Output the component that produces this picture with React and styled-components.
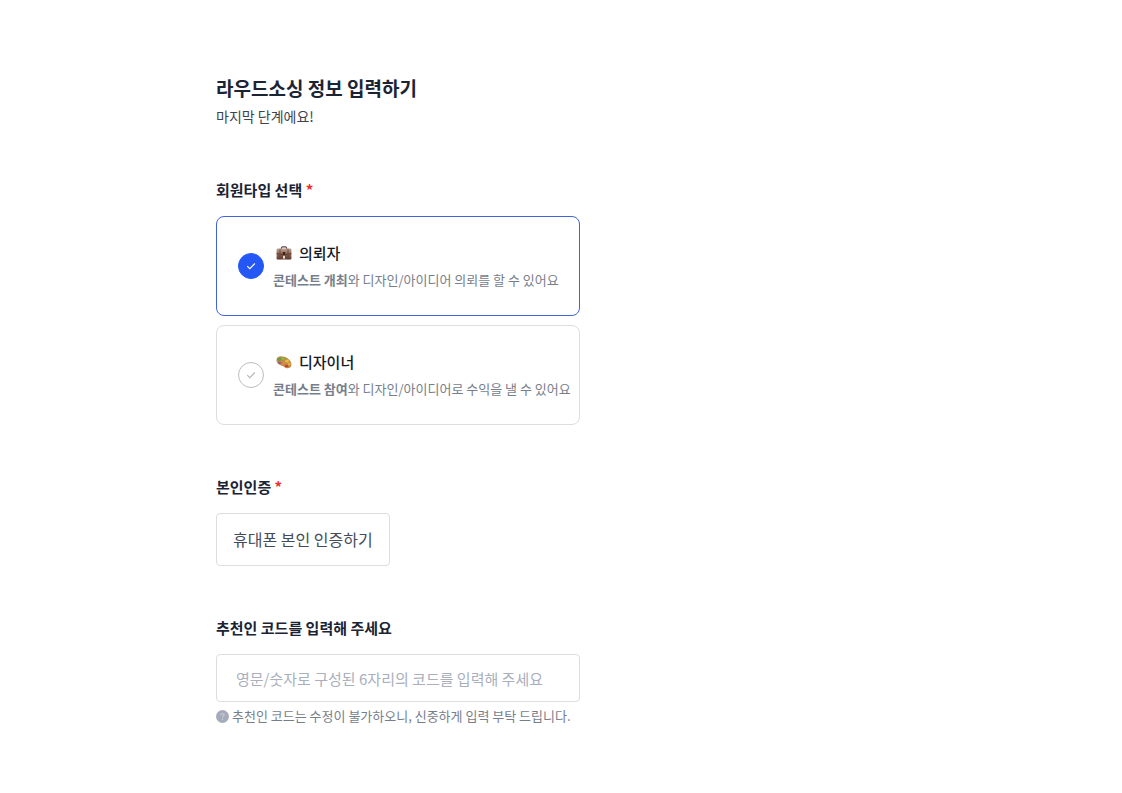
import { useState } from 'react';
import styled, { createGlobalStyle } from 'styled-components';

const memberTypes = [
  {
    id: 'client',
    name: '의뢰자',
    icon: BriefcaseIcon,
    strong: '콘테스트 개최',
    text: '와 디자인/아이디어 의뢰를 할 수 있어요',
  },
  {
    id: 'designer',
    name: '디자이너',
    icon: PaletteIcon,
    strong: '콘테스트 참여',
    text: '와 디자인/아이디어로 수익을 낼 수 있어요',
  },
];

function BriefcaseIcon() {
  return (
    <svg width="16" height="16" viewBox="0 0 16 16" aria-hidden="true">
      <defs>
        <linearGradient id="leather" x1="0" y1="0" x2="0" y2="1">
          <stop offset="0" stopColor="#c0a496" />
          <stop offset="0.5" stopColor="#86604f" />
          <stop offset="1" stopColor="#5d3c30" />
        </linearGradient>
      </defs>
      <path d="M5.5 4V2.8q0-1 1-1h3q1 0 1 1V4" fill="none" stroke="#5b4a45" strokeWidth="1.2" />
      <rect x="0.6" y="3.6" width="14.8" height="11" rx="1.2" fill="url(#leather)" />
      <path d="M.6 8.4 6 9.6h4l5.4-1.2" fill="none" stroke="#5b3a2f" strokeWidth="0.8" />
      <path d="M4 3.8v10.6M12 3.8v10.6" stroke="#654335" strokeWidth="0.8" />
      <rect x="6.8" y="7" width="2.4" height="5.6" fill="#3f241c" />
      <rect x="7" y="10.6" width="2" height="3" fill="#e6ddd8" />
    </svg>
  );
}

function PaletteIcon() {
  return (
    <svg width="16" height="16" viewBox="0 0 16 16" aria-hidden="true">
      <path
        d="M.6 5.2C1.2 2.2 4.800 1.600 8.400 2.800c4 1.300 7.300 4.600 7 8.100-.2 2.800-2.900 3.700-5.400 3.100-1.800-.4-2-1.300-3.200-1.900-1.400-.5-3-.6-4.400-2C1.200 9 .2 7.200.6 5.200Z"
        fill="#c08a48"
      />
      <ellipse cx="3.4" cy="5.2" rx="2.2" ry="1.8" fill="#6f9a3f" />
      <ellipse cx="7.2" cy="4.6" rx="2.2" ry="1.4" fill="#96b044" />
      <ellipse cx="11" cy="6.9" rx="1.9" ry="1.5" fill="#e8c03c" />
      <ellipse cx="13.2" cy="9.9" rx="1.5" ry="1.5" fill="#e8ab38" />
      <ellipse cx="3.7" cy="8.8" rx="1.7" ry="1.1" fill="#a84f86" />
      <ellipse cx="10.6" cy="12" rx="1.8" ry="1.3" fill="#c9402f" />
      <ellipse cx="8" cy="9" rx="1.7" ry="1.1" fill="#d9913d" />
    </svg>
  );
}

const App = () => {
  const [memberType, setMemberType] = useState('client');
  const [code, setCode] = useState('');

  return (
    <>
      <GlobalStyle />
      <Page>
        <Form onSubmit={(e) => e.preventDefault()}>
          <header>
            <Title>라우드소싱 정보 입력하기</Title>
            <Subtitle>마지막 단계에요!</Subtitle>
          </header>

          <Section role="radiogroup" aria-labelledby="member-type">
            <SectionTitle id="member-type">
              회원타입 선택 <Required>*</Required>
            </SectionTitle>
            <CardList>
              {memberTypes.map(({ id, name, icon: Icon, strong, text }) => (
                <Card key={id} $active={memberType === id}>
                  <RadioBox>
                    <Radio
                      name="memberType"
                      value={id}
                      checked={memberType === id}
                      onChange={() => setMemberType(id)}
                    />
                    <CheckMark viewBox="0 0 12 12" $active={memberType === id} aria-hidden="true">
                      <path d="M1.5 6.2 4.6 9.2 10.6 3" />
                    </CheckMark>
                  </RadioBox>
                  <div>
                    <CardName>
                      <Icon />
                      {name}
                    </CardName>
                    <CardText>
                      <strong>{strong}</strong>
                      {text}
                    </CardText>
                  </div>
                </Card>
              ))}
            </CardList>
          </Section>

          <Section>
            <SectionTitle>
              본인인증 <Required>*</Required>
            </SectionTitle>
            <VerifyButton type="button">휴대폰 본인 인증하기</VerifyButton>
          </Section>

          <Section>
            <SectionTitle>
              <label htmlFor="code">추천인 코드를 입력해 주세요</label>
            </SectionTitle>
            <CodeInput
              id="code"
              placeholder="영문/숫자로 구성된 6자리의 코드를 입력해 주세요"
              maxLength={6}
              value={code}
              onChange={(e) => setCode(e.target.value)}
              aria-describedby="code-help"
            />
            <Help id="code-help">
              <svg width="13" height="13" viewBox="0 0 13 13" aria-hidden="true">
                <circle cx="6.5" cy="6.5" r="6.5" fill="#a5abba" />
                <path
                  d="M5 5.2c0-2 3.1-2 3.1-.1 0 1.2-1.5 1.2-1.5 2.4M6.6 8.8v1"
                  fill="none"
                  stroke="#d9dce4"
                  strokeWidth="1"
                />
              </svg>
              추천인 코드는 수정이 불가하오니, 신중하게 입력 부탁 드립니다.
            </Help>
          </Section>
        </Form>
      </Page>
    </>
  );
};

const GlobalStyle = createGlobalStyle`
  * {
    box-sizing: border-box;
  }

  body {
    margin: 0;
    background: #fff;
    color: #1b2434;
    font-family: 'Noto Sans CJK KR', sans-serif;
  }

  button,
  input {
    font-family: inherit;
  }
`;

const Page = styled.main`
  max-width: 722px;
  margin: 0 auto;
  padding: 74px 16px 64px;
`;

const Form = styled.form`
  max-width: 364px;
`;

const Title = styled.h1`
  margin: 0;
  font-size: 19px;
  font-weight: 700;
  line-height: 28px;
  white-space: nowrap;
`;

const Subtitle = styled.p`
  margin: 2px 0 0;
  color: #3c4452;
  font-size: 14px;
  line-height: 24px;
`;

const Section = styled.section`
  margin-top: 51px;
`;

const SectionTitle = styled.h2`
  margin: 0 0 15px;
  font-size: 15px;
  font-weight: 700;
  line-height: 22px;
`;

const Required = styled.span`
  color: #f02d2d;
`;

const CardList = styled.div`
  display: grid;
  gap: 9px;
`;

const Card = styled.label`
  display: flex;
  align-items: center;
  gap: 9px;
  padding: 23px 8px 23px 21px;
  border: 1px solid ${(props) => (props.$active ? '#4262e0' : '#dcdde0')};
  border-radius: 8px;
  cursor: pointer;
`;

const RadioBox = styled.span`
  display: grid;
  flex: none;
  place-items: center;

  > * {
    grid-area: 1 / 1;
  }
`;

const Radio = styled.input.attrs({ type: 'radio' })`
  appearance: none;
  width: 26px;
  height: 26px;
  margin: 0;
  border: 1px solid #bcbdc0;
  border-radius: 50%;
  background: #fff;
  cursor: pointer;

  &:checked {
    border-color: #2457f5;
    background: #2457f5;
  }
`;

const CheckMark = styled.svg`
  width: 10px;
  height: 10px;
  fill: none;
  stroke: ${(props) => (props.$active ? '#fff' : '#b4b5b9')};
  stroke-width: 1.3;
  pointer-events: none;
`;

const CardName = styled.div`
  display: flex;
  align-items: center;
  gap: 7px;
  padding-left: 3px;
  color: #17191f;
  font-size: 15px;
  font-weight: 500;
  line-height: 26px;
`;

const CardText = styled.div`
  margin-top: 2px;
  color: #777e8b;
  font-size: 13px;
  line-height: 24px;
  white-space: nowrap;

  strong {
    font-weight: 700;
  }
`;

const VerifyButton = styled.button`
  display: block;
  padding: 14px 16px;
  border: 1px solid #dcdde0;
  border-radius: 4px;
  background: #fff;
  color: #444c5c;
  font-size: 16px;
  line-height: 23px;
  cursor: pointer;
`;

const CodeInput = styled.input`
  display: block;
  width: 100%;
  height: 48px;
  padding: 0 19px;
  border: 1px solid #dcdde0;
  border-radius: 4px;
  color: #1b2434;
  font-size: 15px;

  &::placeholder {
    color: #a9afbc;
  }
`;

const Help = styled.p`
  display: flex;
  align-items: center;
  gap: 3px;
  margin: 4px 0 0;
  color: #777e8b;
  font-size: 13px;
  line-height: 20px;
  white-space: nowrap;
`;

export default App;
